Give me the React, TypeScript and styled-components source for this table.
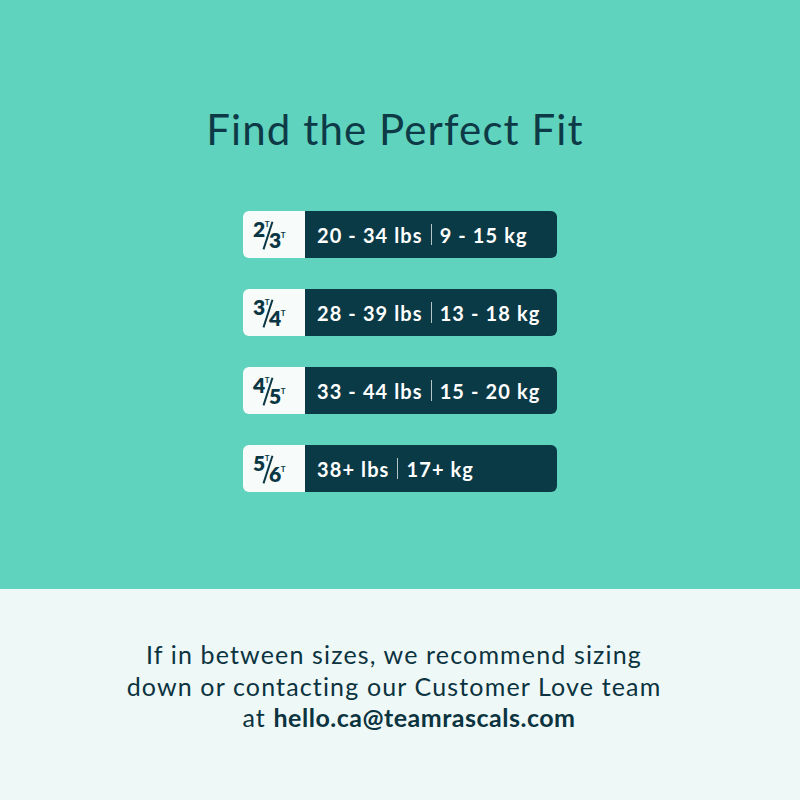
import styled, { createGlobalStyle } from 'styled-components'

const GlobalStyle = createGlobalStyle`
  html, body {
    margin: 0;
    padding: 0;
  }
  body {
    font-family: Lato, 'Noto Sans', sans-serif;
    color: #0b3744;
  }
`

type Size = {
  from: string
  to: string
  lbs: string
  kg: string
}

const sizes: Size[] = [
  { from: '2', to: '3', lbs: '20 - 34 lbs', kg: '9 - 15 kg' },
  { from: '3', to: '4', lbs: '28 - 39 lbs', kg: '13 - 18 kg' },
  { from: '4', to: '5', lbs: '33 - 44 lbs', kg: '15 - 20 kg' },
  { from: '5', to: '6', lbs: '38+ lbs', kg: '17+ kg' },
]

const SizeFraction = ({ from, to }: { from: string; to: string }) => (
  <Fraction>
    <Top>
      {from}
      <Sup>T</Sup>
    </Top>
    <Slash />
    <Bottom>
      {to}
      <Sup>T</Sup>
    </Bottom>
  </Fraction>
)

export default function App() {
  return (
    <Page>
      <GlobalStyle />
      <Hero>
        <Title>Find the Perfect Fit</Title>
        <List>
          {sizes.map((s) => (
            <Row key={s.from}>
              <Badge>
                <SizeFraction from={s.from} to={s.to} />
              </Badge>
              <Weights>
                <span>{s.lbs}</span>
                <Divider />
                <span>{s.kg}</span>
              </Weights>
            </Row>
          ))}
        </List>
      </Hero>
      <Footer>
        <Note>
          <Line $shift={-6}>If in between sizes, we recommend sizing</Line>
          <Line $shift={-6}>down or contacting our Customer Love team</Line>
          <Line $shift={9}>
            at <strong>hello.ca@teamrascals.com</strong>
          </Line>
        </Note>
      </Footer>
    </Page>
  )
}

const Page = styled.div`
  width: 800px;
  height: 800px;
  display: flex;
  flex-direction: column;
`

const Hero = styled.section`
  height: 589px;
  background: #5fd3bd;
  display: flex;
  flex-direction: column;
  align-items: center;
  padding-top: 103px;
  box-sizing: border-box;
`

const Title = styled.h1`
  margin: 0;
  padding-right: 10px;
  font-size: 42px;
  font-weight: 400;
  letter-spacing: 1.1px;
  line-height: 52px;
  color: #0d3a46;
`

const List = styled.div`
  margin-top: 56px;
  display: flex;
  flex-direction: column;
  gap: 31px;
`

const Row = styled.div`
  width: 314px;
  height: 47px;
  display: flex;
  border-radius: 6px;
  overflow: hidden;
`

const Badge = styled.div`
  width: 62px;
  box-sizing: border-box;
  padding: 10px 0 0 11px;
  background: #f7fbfa;
`

const Fraction = styled.div`
  position: relative;
  width: 33px;
  height: 28px;
  font-weight: 800;
  color: #0b3744;
  font-size: 21px;
  line-height: 1;
`

const Top = styled.span`
  position: absolute;
  left: -1px;
  top: -3.5px;
  letter-spacing: -0.5px;
`

const Bottom = styled.span`
  position: absolute;
  left: 15px;
  top: 8px;
  letter-spacing: -0.5px;
`

const Sup = styled.span`
  font-size: 8px;
  font-weight: 700;
  vertical-align: top;
  position: relative;
  top: 2px;
`

const Slash = styled.span`
  position: absolute;
  left: 13.2px;
  top: 0;
  width: 1.6px;
  height: 29px;
  background: #0b3744;
  transform: rotate(18deg);
`

const Weights = styled.div`
  flex: 1;
  background: #0b3a47;
  color: #ffffff;
  display: flex;
  align-items: center;
  gap: 8px;
  padding-left: 12px;
  font-size: 20px;
  font-weight: 700;
  letter-spacing: 1.1px;
`

const Divider = styled.span`
  width: 1px;
  height: 21px;
  background: rgba(255, 255, 255, 0.7);
`

const Footer = styled.section`
  flex: 1;
  background: #eef8f6;
  display: flex;
  justify-content: center;
  padding-top: 50px;
  box-sizing: border-box;
`

const Note = styled.div`
  display: flex;
  flex-direction: column;
  align-items: center;
  font-size: 25px;
  line-height: 31.5px;
  letter-spacing: 1.15px;
  color: #0b3340;

  strong {
    font-weight: 700;
    letter-spacing: 0.5px;
  }
`

const Line = styled.span<{ $shift: number }>`
  display: block;
  white-space: nowrap;
  transform: translateX(${(p) => p.$shift}px);
`
